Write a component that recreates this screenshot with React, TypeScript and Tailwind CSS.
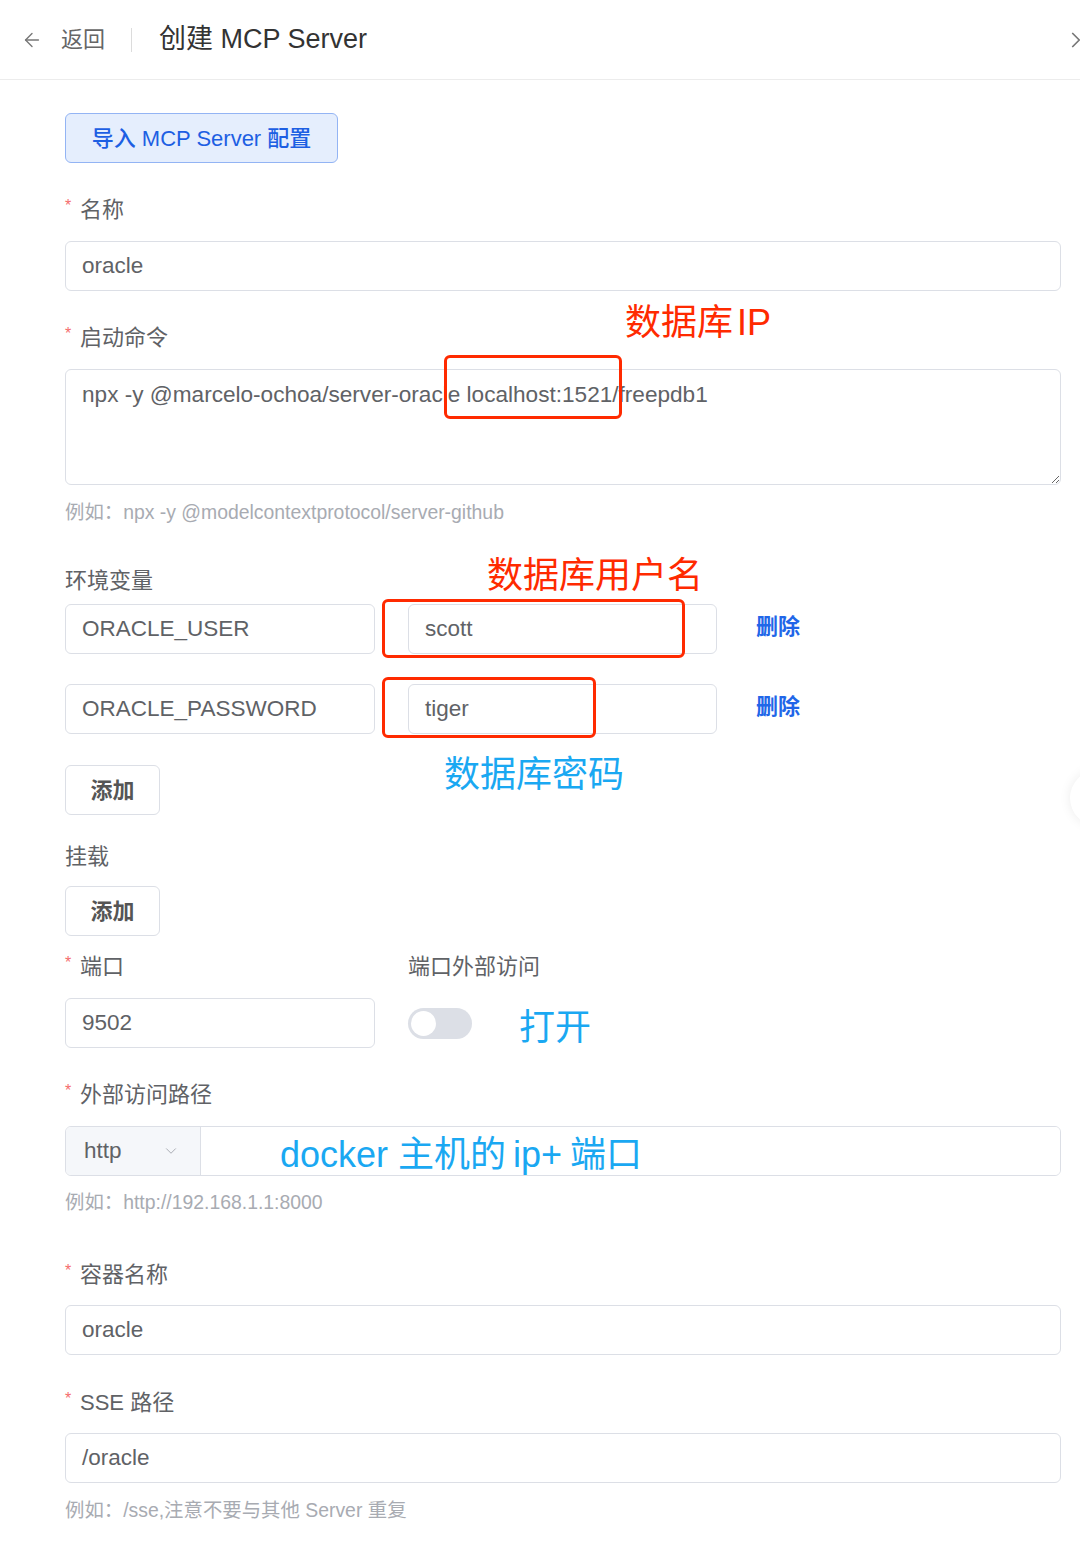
import React from "react";
import { ArrowLeft, ChevronRight, ChevronDown } from "lucide-react";

const font = "font-['Liberation_Sans','Noto_Sans_CJK_SC',sans-serif]";

function Label({ text, required = true }: { text: string; required?: boolean }) {
  return (
    <div className="flex h-[30px] items-center text-[22px] leading-none text-[#606266]">
      {required && <span className="mr-[7px] w-[8px] -translate-y-[4px] text-[16px] text-[#f56c6c]">*</span>}
      <span>{text}</span>
    </div>
  );
}

function Field({ value, className = "" }: { value: string; className?: string }) {
  return (
    <div
      className={`flex h-[50px] items-center rounded-[6px] border border-[#dcdfe6] bg-white px-[16px] text-[22.5px] text-[#606266] ${className}`}
    >
      {value}
    </div>
  );
}

function Helper({ text }: { text: string }) {
  return <div className="h-[26px] text-[19.4px] leading-[26px] text-[#a8abb2]">{text}</div>;
}

function AddButton() {
  return (
    <div className="flex h-[50px] w-[95px] items-center justify-center rounded-[6px] border border-[#dcdfe6] bg-white text-[22px] font-bold text-[#555]">
      添加
    </div>
  );
}

export default function App() {
  return (
    <div className={`relative h-[1541px] w-[1080px] overflow-hidden bg-white ${font}`}>
      {/* Header */}
      <div className="flex h-[80px] items-center border-b border-[#ececec]">
        <ArrowLeft className="ml-[21px] text-[#777]" size={22} strokeWidth={1.5} />
        <span className="ml-[18px] text-[22px] text-[#666]">返回</span>
        <div className="ml-[26px] h-[24px] w-px bg-[#dcdcdc]" />
        <span className="ml-[27px] text-[27px] text-[#333]">创建 MCP Server</span>
        <ChevronRight className="ml-auto mr-[-9px] text-[#777]" size={26} strokeWidth={1.6} />
      </div>

      {/* Form */}
      <div className="flex flex-col pl-[65px] pr-[19px] pt-[33px]">
        <div className="flex h-[50px] w-[273px] items-center justify-center rounded-[6px] border border-[#93b4f4] bg-[#e5eefd] text-[22px] font-medium text-[#1d5fe3]">
          导入 MCP Server 配置
        </div>

        <div className="mt-[32px]">
          <Label text="名称" />
        </div>
        <Field value="oracle" className="mt-[16px]" />

        <div className="mt-[32px]">
          <Label text="启动命令" />
        </div>
        <textarea
          readOnly
          value="npx -y @marcelo-ochoa/server-oracle localhost:1521/freepdb1"
          className={`mt-[16px] h-[116px] rounded-[6px] border border-[#dcdfe6] px-[16px] py-[10px] text-[22.6px] leading-[30px] text-[#606266] outline-none ${font}`}
        />
        <div className="mt-[14px]">
          <Helper text="例如：npx -y @modelcontextprotocol/server-github" />
        </div>

        <div className="mt-[41px]">
          <Label text="环境变量" required={false} />
        </div>
        <div className="mt-[8px] flex items-center">
          <Field value="ORACLE_USER" className="w-[310px]" />
          <Field value="scott" className="ml-[33px] w-[309px]" />
          <span className="ml-[39px] -translate-y-[3px] text-[22px] font-bold text-[#2166e8]">删除</span>
        </div>
        <div className="mt-[30px] flex items-center">
          <Field value="ORACLE_PASSWORD" className="w-[310px]" />
          <Field value="tiger" className="ml-[33px] w-[309px]" />
          <span className="ml-[39px] -translate-y-[3px] text-[22px] font-bold text-[#2166e8]">删除</span>
        </div>
        <div className="mt-[31px]">
          <AddButton />
        </div>

        <div className="mt-[27px]">
          <Label text="挂载" required={false} />
        </div>
        <div className="mt-[14px]">
          <AddButton />
        </div>

        <div className="mt-[16px] flex">
          <div className="flex w-[310px] flex-col">
            <Label text="端口" />
            <Field value="9502" className="mt-[16px]" />
          </div>
          <div className="ml-[33px] flex flex-col">
            <Label text="端口外部访问" required={false} />
            <div className="mt-[26px] flex h-[31px] w-[64px] items-center rounded-full bg-[#dcdfe6] px-[3px]">
              <div className="h-[25px] w-[25px] rounded-full bg-white" />
            </div>
          </div>
        </div>

        <div className="mt-[32px]">
          <Label text="外部访问路径" />
        </div>
        <div className="mt-[16px] flex h-[50px] overflow-hidden rounded-[6px] border border-[#dcdfe6]">
          <div className="flex w-[135px] items-center justify-between border-r border-[#dcdfe6] bg-[#f5f7fa] pl-[18px] pr-[20px] text-[22.5px] text-[#606266]">
            <span>http</span>
            <ChevronDown size={18} strokeWidth={1.3} className="text-[#a8abb2]" />
          </div>
          <div className="flex-1 bg-white" />
        </div>
        <div className="mt-[13px]">
          <Helper text="例如：http://192.168.1.1:8000" />
        </div>

        <div className="mt-[45px]">
          <Label text="容器名称" />
        </div>
        <Field value="oracle" className="mt-[15px]" />

        <div className="mt-[33px]">
          <Label text="SSE 路径" />
        </div>
        <Field value="/oracle" className="mt-[15px]" />
        <div className="mt-[14px]">
          <Helper text="例如：/sse,注意不要与其他 Server 重复" />
        </div>
      </div>

      {/* Annotations */}
      <div className="absolute left-[444px] top-[355px] h-[64px] w-[178px] rounded-[6px] border-[3px] border-[#ff2a00]" />
      <div className="absolute left-[382px] top-[599px] h-[59px] w-[303px] rounded-[6px] border-[3px] border-[#ff2a00]" />
      <div className="absolute left-[382px] top-[677px] h-[61px] w-[214px] rounded-[6px] border-[3px] border-[#ff2a00]" />

      <div className="absolute left-[625px] top-[305px] text-[36px] leading-none text-[#ff2a00]">
        数据库<span className="ml-[4px]">IP</span>
      </div>
      <div className="absolute left-[487px] top-[558px] text-[36px] leading-none text-[#ff2a00]">数据库用户名</div>
      <div className="absolute left-[444px] top-[757px] text-[36px] leading-none text-[#1aa8f2]">数据库密码</div>
      <div className="absolute left-[519px] top-[1010px] text-[36px] leading-none text-[#1aa8f2]">打开</div>
      <div className="absolute left-[280px] top-[1137px] text-[36px] leading-none text-[#1aa8f2]">
        docker 主机的<span className="ml-[7px]">ip+</span>
        <span className="ml-[8px]">端口</span>
      </div>

      <div className="absolute left-[1070px] top-[770px] h-[56px] w-[56px] rounded-full bg-white shadow-[0_0_12px_rgba(0,0,0,0.08)]" />
    </div>
  );
}
